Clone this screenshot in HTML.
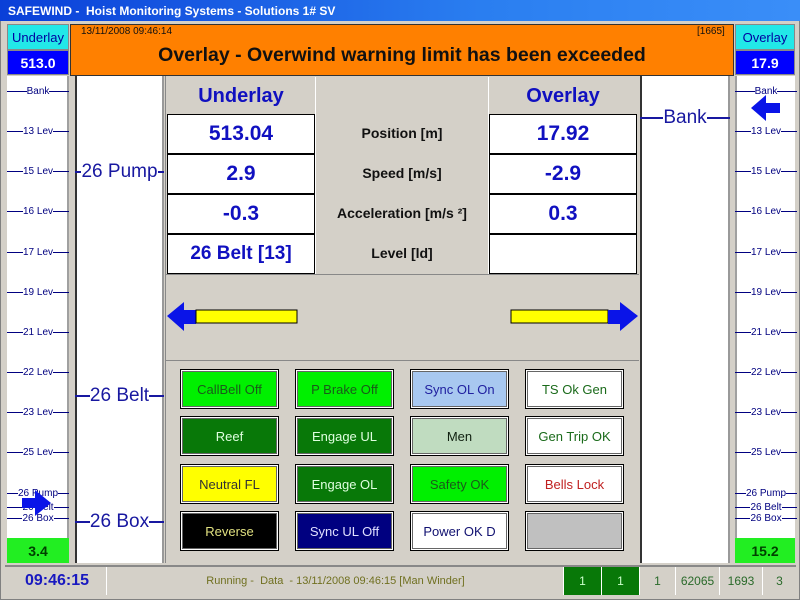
<!DOCTYPE html>
<html><head><style>
*{margin:0;padding:0;box-sizing:border-box}
body{width:800px;height:600px;background:#d4d0c8;position:relative;overflow:hidden;font-family:"Liberation Sans",Arial,sans-serif}
.a{position:absolute}
.c{display:flex;align-items:center;justify-content:center;text-align:center}
.tick{position:absolute;left:0;width:62px;height:14px;font-size:10px;color:#000080;display:flex;align-items:center}
.tick:before,.tick:after{content:"";flex:1;height:1px;background:#000080}
.cell{position:absolute;background:#fff;border:1px solid #000;color:#1010c0;font-weight:bold;font-size:21px;display:flex;align-items:center;justify-content:center}
.lbl{position:absolute;left:316px;width:172px;font-weight:bold;font-size:14px;color:#111;text-align:center}
.btn{position:absolute;width:99px;height:40px;border:1px solid #000;box-shadow:inset 0 0 0 1px #fff,inset 0 0 0 2px #666;font-size:13px;display:flex;align-items:center;justify-content:center}
.big{position:absolute;font-size:19px;color:#1818a0;display:flex;align-items:center}
.big:before,.big:after{content:"";height:2px;background:#1818a0;flex:1}
.st{position:absolute;top:567px;height:28px;font-size:12px;display:flex;align-items:center;justify-content:center;border-left:1px solid #fff}
</style></head><body>
<div class="a" style="left:0;top:0;width:800px;height:21px;background:linear-gradient(90deg,#0a3fd8,#2a7ef0 60%,#3a8ef8);color:#fff;font-weight:bold;font-size:12px;padding:4px 0 0 8px">SAFEWIND -&nbsp; Hoist Monitoring Systems - Solutions 1# SV</div>
<div class="a" style="left:0;top:21px;width:800px;height:579px;border:1px solid #808080;border-top:none"></div>

<div class="a c" style="left:7px;top:24px;width:62px;height:26px;background:#22e8e8;color:#0000a0;font-size:13px;border:1px solid #888">Underlay</div>
<div class="a c" style="left:7px;top:50px;width:62px;height:25px;background:#0000ff;color:#fff;font-weight:bold;font-size:14px;border:1px solid #888">513.0</div>
<div class="a" style="left:7px;top:76px;width:62px;height:462px;background:#fff;border-right:2px solid #a0a0a0"></div>
<div class="a c" style="left:7px;top:538px;width:62px;height:25px;background:#22ee22;color:#004000;font-weight:bold;font-size:14px">3.4</div>

<div class="a c" style="left:735px;top:24px;width:60px;height:26px;background:#22e8e8;color:#0000a0;font-size:13px;border:1px solid #888">Overlay</div>
<div class="a c" style="left:735px;top:50px;width:60px;height:25px;background:#0000ff;color:#fff;font-weight:bold;font-size:14px;border:1px solid #888">17.9</div>
<div class="a" style="left:735px;top:76px;width:60px;height:462px;background:#fff;border-left:2px solid #a0a0a0"></div>
<div class="a c" style="left:735px;top:538px;width:60px;height:25px;background:#22ee22;color:#004000;font-weight:bold;font-size:14px">15.2</div>

<div class="a" style="left:7px;top:0;width:62px;height:600px">
<div class="tick" style="top:84px">Bank</div>
<div class="tick" style="top:124px">13 Lev</div>
<div class="tick" style="top:164px">15 Lev</div>
<div class="tick" style="top:204px">16 Lev</div>
<div class="tick" style="top:245px">17 Lev</div>
<div class="tick" style="top:285px">19 Lev</div>
<div class="tick" style="top:325px">21 Lev</div>
<div class="tick" style="top:365px">22 Lev</div>
<div class="tick" style="top:405px">23 Lev</div>
<div class="tick" style="top:445px">25 Lev</div>
<div class="tick" style="top:486px">26 Pump</div>
<div class="tick" style="top:500px">26 Belt</div>
<div class="tick" style="top:511px">26 Box</div>
</div>
<div class="a" style="left:735px;top:0;width:62px;height:600px">
<div class="tick" style="top:84px">Bank</div>
<div class="tick" style="top:124px">13 Lev</div>
<div class="tick" style="top:164px">15 Lev</div>
<div class="tick" style="top:204px">16 Lev</div>
<div class="tick" style="top:245px">17 Lev</div>
<div class="tick" style="top:285px">19 Lev</div>
<div class="tick" style="top:325px">21 Lev</div>
<div class="tick" style="top:365px">22 Lev</div>
<div class="tick" style="top:405px">23 Lev</div>
<div class="tick" style="top:445px">25 Lev</div>
<div class="tick" style="top:486px">26 Pump</div>
<div class="tick" style="top:500px">26 Belt</div>
<div class="tick" style="top:511px">26 Box</div>
</div>
<svg class="a" style="left:22px;top:490px" width="30" height="26"><path d="M0 8H13V0L29 13 13 26V18H0Z" fill="#0a14e8"/></svg>
<svg class="a" style="left:751px;top:95px" width="30" height="26"><path d="M29 8H15V0L0 13 15 26V18H29Z" fill="#0a14e8"/></svg>

<div class="a" style="left:70px;top:24px;width:664px;height:52px;background:#ff8000;border:1px solid #333"></div>
<div class="a" style="left:81px;top:26px;font-size:10px;color:#111">13/11/2008 09:46:14</div>
<div class="a" style="left:697px;top:26px;font-size:10px;color:#111">[1665]</div>
<div class="a" style="left:70px;top:44px;width:664px;text-align:center;font-weight:bold;font-size:19.5px;color:#111">Overlay - Overwind warning limit has been exceeded</div>

<div class="a" style="left:75px;top:76px;width:89px;height:487px;background:#fff;border-left:2px solid #333;border-right:2px solid #999"></div>
<div class="a" style="left:640px;top:76px;width:90px;height:487px;background:#fff;border-left:2px solid #333;border-right:2px solid #999"></div>
<div class="big" style="left:75px;top:161px;width:89px;height:22px">26 Pump</div>
<div class="big" style="left:75px;top:385px;width:89px;height:22px">26 Belt</div>
<div class="big" style="left:75px;top:511px;width:89px;height:22px">26 Box</div>
<div class="big" style="left:640px;top:107px;width:90px;height:22px">Bank</div>

<div class="a" style="left:165px;top:76px;width:474px;height:487px;background:#d4d0c8;border-left:1px solid #888"></div>
<div class="a c" style="left:167px;top:78px;width:148px;height:36px;color:#1010c0;font-weight:bold;font-size:20px">Underlay</div>
<div class="a c" style="left:489px;top:78px;width:148px;height:36px;color:#1010c0;font-weight:bold;font-size:20px">Overlay</div>
<div class="a" style="left:315px;top:77px;width:1px;height:197px;background:#fff"></div>
<div class="a" style="left:488px;top:77px;width:1px;height:197px;background:#fff"></div>
<div class="cell" style="left:167px;top:114px;width:148px;height:40px">513.04</div>
<div class="cell" style="left:167px;top:154px;width:148px;height:40px">2.9</div>
<div class="cell" style="left:167px;top:194px;width:148px;height:40px">-0.3</div>
<div class="cell" style="left:167px;top:234px;width:148px;height:40px;font-size:19px">26 Belt [13]</div>
<div class="cell" style="left:489px;top:114px;width:148px;height:40px">17.92</div>
<div class="cell" style="left:489px;top:154px;width:148px;height:40px">-2.9</div>
<div class="cell" style="left:489px;top:194px;width:148px;height:40px">0.3</div>
<div class="cell" style="left:489px;top:234px;width:148px;height:40px"></div>
<div class="lbl" style="top:125px">Position [m]</div>
<div class="lbl" style="top:165px">Speed [m/s]</div>
<div class="lbl" style="top:205px">Acceleration [m/s ²]</div>
<div class="lbl" style="top:245px">Level [ld]</div>
<div class="a" style="left:165px;top:274px;width:474px;height:1px;background:#888"></div>
<svg class="a" style="left:166px;top:301px" width="135" height="32"><path d="M1 15L18 1V9H30V23H18V30Z" fill="#0a14e8"/><rect x="30" y="9" width="101" height="13" fill="#ffff00" stroke="#000"/></svg>
<svg class="a" style="left:508px;top:301px" width="132" height="32"><rect x="3" y="9" width="97" height="13" fill="#ffff00" stroke="#000"/><path d="M100 9H112V1L130 15 112 30V23H100Z" fill="#0a14e8"/></svg>
<div class="a" style="left:165px;top:360px;width:474px;height:1px;background:#fff;border-top:1px solid #888"></div>

<div class="btn" style="left:180px;top:369px;background:#00f000;color:#1a5a1a">CallBell Off</div>
<div class="btn" style="left:295px;top:369px;background:#00f000;color:#1a5a1a">P Brake Off</div>
<div class="btn" style="left:410px;top:369px;background:#a8c8f0;color:#2020a0">Sync OL On</div>
<div class="btn" style="left:525px;top:369px;background:#fff;color:#1a6a1a">TS Ok Gen</div>
<div class="btn" style="left:180px;top:416px;background:#087808;color:#e0ffe0">Reef</div>
<div class="btn" style="left:295px;top:416px;background:#087808;color:#e0ffe0">Engage UL</div>
<div class="btn" style="left:410px;top:416px;background:#c0dcc0;color:#102010">Men</div>
<div class="btn" style="left:525px;top:416px;background:#fff;color:#1a6a1a">Gen Trip OK</div>
<div class="btn" style="left:180px;top:464px;background:#ffff00;color:#333">Neutral FL</div>
<div class="btn" style="left:295px;top:464px;background:#087808;color:#e0ffe0">Engage OL</div>
<div class="btn" style="left:410px;top:464px;background:#00f000;color:#1a5a1a">Safety OK</div>
<div class="btn" style="left:525px;top:464px;background:#fff;color:#c02020">Bells Lock</div>
<div class="btn" style="left:180px;top:511px;background:#000;color:#e0e080">Reverse</div>
<div class="btn" style="left:295px;top:511px;background:#000080;color:#e0e0ff">Sync UL Off</div>
<div class="btn" style="left:410px;top:511px;background:#fff;color:#101070">Power OK D</div>
<div class="btn" style="left:525px;top:511px;background:#c0c0c0"></div>

<div class="a" style="left:5px;top:565px;width:791px;height:32px;border-top:2px solid #888"></div>
<div class="a c" style="left:8px;top:567px;width:99px;height:28px;color:#1818c0;font-weight:bold;font-size:16px;border-right:1px solid #fff">09:46:15</div>
<div class="a c" style="left:108px;top:567px;width:455px;height:28px;color:#707020;font-size:11px">Running -&nbsp; Data&nbsp; - 13/11/2008 09:46:15 [Man Winder]</div>
<div class="st" style="left:563px;width:38px;background:#087808;color:#cfc">1</div>
<div class="st" style="left:601px;width:38px;background:#087808;color:#cfc">1</div>
<div class="st" style="left:639px;width:36px;color:#2a6a2a">1</div>
<div class="st" style="left:675px;width:44px;color:#2a6a2a">62065</div>
<div class="st" style="left:719px;width:43px;color:#2a6a2a">1693</div>
<div class="st" style="left:762px;width:34px;color:#2a6a2a">3</div>
</body></html>
